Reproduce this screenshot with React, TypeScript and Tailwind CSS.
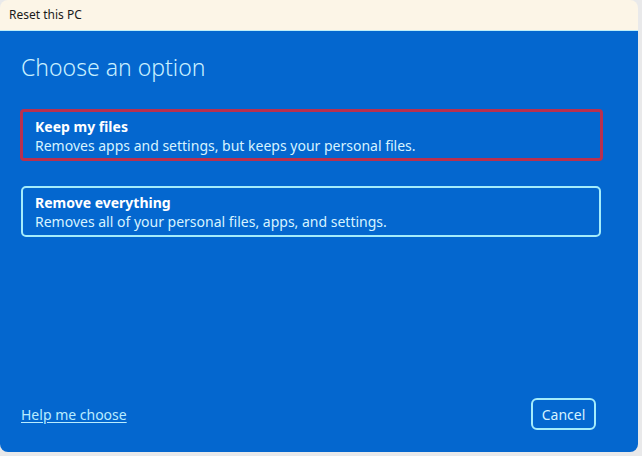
export default function App() {
  const font = { fontFamily: '"Noto Sans", "Open Sans", sans-serif' }

  return (
    <div className="w-[642px] h-[456px] bg-[#e9e9ea]" style={font}>
      <div className="w-[638px] h-[452px] flex flex-col rounded-lg overflow-hidden">
        {/* Title bar */}
        <div className="h-[31px] shrink-0 bg-[#fcf5e7] border-b border-[#bfeef8] flex items-center pl-[9px]">
          <span className="text-[12px] text-[#1a1a1a]">Reset this PC</span>
        </div>

        {/* Body */}
        <div className="flex-1 bg-[#0467cf] flex flex-col px-[20px] pt-[21px] pb-[22px]">
          <h1 className="text-[23px] leading-[30px] font-light text-[#c9f0ff] pl-[1px]">Choose an option</h1>

          <div className="mt-[27px] flex flex-col gap-[25px] w-[583px]">
            <button className="text-left border-[3px] border-[#b9304f] rounded-[4px] px-[12px] pt-[2px] h-[52px] flex flex-col justify-center">
              <span className="text-[14px] leading-[19px] font-bold text-white">Keep my files</span>
              <span className="text-[14px] leading-[20px] text-[#d6f3ff]">Removes apps and settings, but keeps your personal files.</span>
            </button>
            <button className="ml-[1px] w-[580px] text-left border-2 border-[#a4ecfb] rounded-[5px] px-[12px] pt-[1px] h-[51px] flex flex-col justify-center">
              <span className="text-[14px] leading-[19px] font-bold text-white">Remove everything</span>
              <span className="text-[14px] leading-[20px] text-[#d6f3ff]">Removes all of your personal files, apps, and settings.</span>
            </button>
          </div>

          <div className="mt-auto flex items-center justify-between pl-[1px] pr-[22px]">
            <a href="#" className="text-[14px] text-[#b9ecff] underline underline-offset-2">Help me choose</a>
            <button className="w-[65px] h-[32px] border-2 border-[#a4ecfb] rounded-[6px] text-[14px] text-[#d6f3ff]">Cancel</button>
          </div>
        </div>
      </div>
    </div>
  )
}
